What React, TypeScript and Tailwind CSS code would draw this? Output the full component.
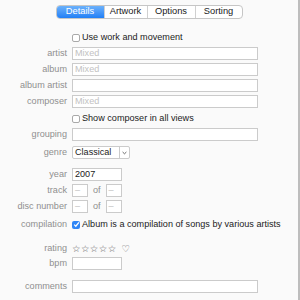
import React from "react";

const font = { fontFamily: '"Liberation Sans", Arial, sans-serif' };

function Row({
  label,
  children,
  mt,
}: {
  label?: string;
  children?: React.ReactNode;
  mt: string;
}) {
  return (
    <div className={`flex items-center h-[13px] ${mt}`}>
      <div className="w-[67px] shrink-0 text-right text-[#8f8f8f] leading-none whitespace-nowrap">
        {label}
      </div>
      <div className="ml-[5px] flex items-center h-full">{children}</div>
    </div>
  );
}

function Input({ w, text, placeholder }: { w: string; text?: string; placeholder?: string }) {
  return (
    <div
      className={`h-full ${w} border border-[#cbcbcb] bg-white flex items-center px-[2px] leading-none whitespace-nowrap`}
    >
      {text ? (
        <span className="text-[#1a1a1a]">{text}</span>
      ) : placeholder ? (
        <span className="text-[#c2c2c2]">{placeholder}</span>
      ) : null}
    </div>
  );
}

function Check({ checked }: { checked?: boolean }) {
  return checked ? (
    <div className="w-[8px] h-[8px] rounded-[2px] bg-[#2f86f6] flex items-center justify-center">
      <svg width="7" height="7" viewBox="0 0 7 7">
        <path d="M1.2 3.6 L2.8 5.2 L5.9 1.4" stroke="white" strokeWidth="1.3" fill="none" />
      </svg>
    </div>
  ) : (
    <div className="w-[8px] h-[8px] rounded-[2px] border border-[#a9a9a9] bg-white" />
  );
}

export default function App() {
  return (
    <div className="w-[300px] h-[300px] flex bg-white overflow-hidden" style={font}>
      <div className="w-[298px] h-full bg-[#fafafa] flex flex-col text-[9.1px] text-[#1a1a1a]">
        {/* tabs */}
        <div className="mt-[5px] h-[14px] flex justify-center">
          <div className="flex h-full border border-[#c6c6c6] rounded-[4px] overflow-hidden bg-white leading-none text-[9.3px]">
            <div className="w-[47px] flex items-center justify-center text-white bg-gradient-to-b from-[#6bb1fb] to-[#1f7ff6]">
              Details
            </div>
            <div className="w-[43px] flex items-center justify-center border-l border-[#d0d0d0]">
              Artwork
            </div>
            <div className="w-[48px] flex items-center justify-center border-l border-[#d0d0d0]">
              Options
            </div>
            <div className="w-[47px] flex items-center justify-center border-l border-[#d0d0d0]">
              Sorting
            </div>
          </div>
        </div>

        <Row mt="mt-[12px]">
          <Check />
          <span className="ml-[2px] leading-none">Use work and movement</span>
        </Row>
        <Row label="artist" mt="mt-[3px]">
          <Input w="w-[186px]" placeholder="Mixed" />
        </Row>
        <Row label="album" mt="mt-[3px]">
          <Input w="w-[186px]" placeholder="Mixed" />
        </Row>
        <Row label="album artist" mt="mt-[3px]">
          <Input w="w-[186px]" />
        </Row>
        <Row label="composer" mt="mt-[3px]">
          <Input w="w-[186px]" placeholder="Mixed" />
        </Row>
        <Row mt="mt-[4px]">
          <Check />
          <span className="ml-[2px] leading-none">Show composer in all views</span>
        </Row>
        <Row label="grouping" mt="mt-[3px]">
          <Input w="w-[186px]" />
        </Row>
        <Row label="genre" mt="mt-[5px]">
          <div className="h-full w-[58px] border border-[#cbcbcb] bg-white flex items-center leading-none rounded-[2px]">
            <span className="pl-[2px] w-[46px]">Classical</span>
            <div className="h-full border-l border-[#cbcbcb] flex-1 flex items-center justify-center">
              <svg width="5" height="4" viewBox="0 0 5 4">
                <path d="M0.6 1 L2.5 2.8 L4.4 1" stroke="#555" strokeWidth="0.9" fill="none" />
              </svg>
            </div>
          </div>
        </Row>
        <Row label="year" mt="mt-[9px]">
          <Input w="w-[50px]" text="2007" />
        </Row>
        <Row label="track" mt="mt-[3px]">
          <Input w="w-[16px]" placeholder="–" />
          <span className="mx-[5px] text-[#8f8f8f] leading-none">of</span>
          <Input w="w-[16px]" placeholder="–" />
        </Row>
        <Row label="disc number" mt="mt-[3px]">
          <Input w="w-[16px]" placeholder="–" />
          <span className="mx-[5px] text-[#8f8f8f] leading-none">of</span>
          <Input w="w-[16px]" placeholder="–" />
        </Row>
        <Row label="compilation" mt="mt-[5px]">
          <Check checked />
          <span className="ml-[2px] leading-none whitespace-nowrap">
            Album is a compilation of songs by various artists
          </span>
        </Row>
        <Row label="rating" mt="mt-[11px]">
          <span
            className="leading-none text-[#666] text-[9.5px] tracking-[0.4px]"
            style={{ fontFamily: '"DejaVu Sans", sans-serif' }}
          >
            ☆☆☆☆☆
          </span>
          <span
            className="ml-[5px] leading-none text-[#666] text-[9.5px]"
            style={{ fontFamily: '"DejaVu Sans", sans-serif' }}
          >
            ♡
          </span>
        </Row>
        <Row label="bpm" mt="mt-[2px]">
          <Input w="w-[50px]" />
        </Row>
        <Row label="comments" mt="mt-[10px]">
          <Input w="w-[186px]" />
        </Row>
      </div>
      <div className="w-[2px] h-full bg-[#bdbdbd]" />
    </div>
  );
}
